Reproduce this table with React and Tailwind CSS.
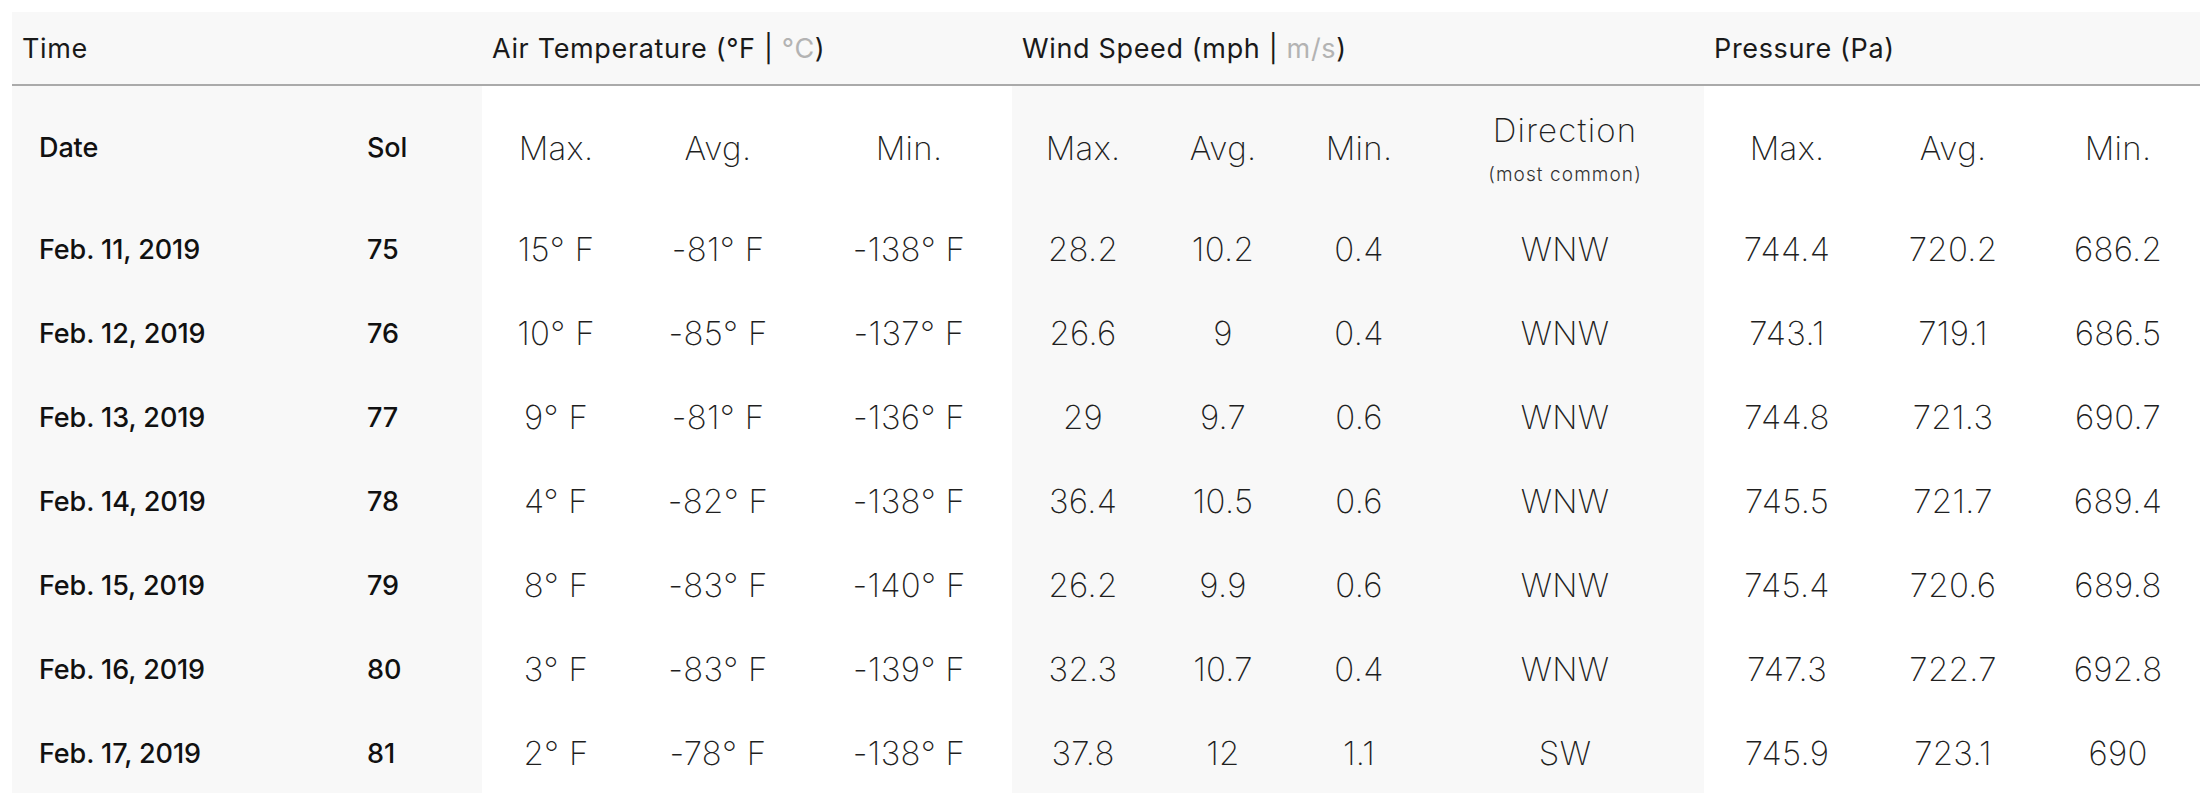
import React from 'react'

// Mars weather table: sols 75-81, InSight lander
const ROWS = [
  ['Feb. 11, 2019', '75', '15° F', '-81° F', '-138° F', '28.2', '10.2', '0.4', 'WNW', '744.4', '720.2', '686.2'],
  ['Feb. 12, 2019', '76', '10° F', '-85° F', '-137° F', '26.6', '9', '0.4', 'WNW', '743.1', '719.1', '686.5'],
  ['Feb. 13, 2019', '77', '9° F', '-81° F', '-136° F', '29', '9.7', '0.6', 'WNW', '744.8', '721.3', '690.7'],
  ['Feb. 14, 2019', '78', '4° F', '-82° F', '-138° F', '36.4', '10.5', '0.6', 'WNW', '745.5', '721.7', '689.4'],
  ['Feb. 15, 2019', '79', '8° F', '-83° F', '-140° F', '26.2', '9.9', '0.6', 'WNW', '745.4', '720.6', '689.8'],
  ['Feb. 16, 2019', '80', '3° F', '-83° F', '-139° F', '32.3', '10.7', '0.4', 'WNW', '747.3', '722.7', '692.8'],
  ['Feb. 17, 2019', '81', '2° F', '-78° F', '-138° F', '37.8', '12', '1.1', 'SW', '745.9', '723.1', '690'],
]

const WIDTHS = [
  'w-[328px]', 'w-[142px]',
  'w-[148px]', 'w-[176px]', 'w-[206px]',
  'w-[142px]', 'w-[138px]', 'w-[134px]', 'w-[278px]',
  'w-[166px]', 'w-[166px]', 'w-[164px]',
]

const GRAY = 'bg-[#f8f8f8]'
const WHITE = 'bg-white'

// background per column: time + wind are shaded, temp + pressure white
const BG = [GRAY, GRAY, WHITE, WHITE, WHITE, GRAY, GRAY, GRAY, GRAY, WHITE, WHITE, WHITE]

const labelCell = 'pl-[27px] pt-[6px] text-left text-[27px] font-medium tracking-[-0.1px] text-[#111]'
const numCell = 'pt-[6px] text-center text-[33px] font-extralight tracking-[0.3px] text-[#1f1f1f]'

export default function App() {
  return (
    <div className="min-h-screen bg-white pl-[12px] pt-[12px] font-[Inter,sans-serif]">
      <table className="w-[2188px] table-fixed border-collapse">
        <colgroup>
          {WIDTHS.map((w, i) => <col key={i} className={w} />)}
        </colgroup>
        <thead>
          <tr className="h-[73px] bg-[#f8f8f8] border-b-2 border-[#aaaaaa] text-[27px] tracking-[0.65px] text-[#1a1a1a]">
            <th colSpan={2} className="pl-[10px] pt-[3px] text-left font-normal">Time</th>
            <th colSpan={3} className="pl-[10px] pt-[3px] text-left font-normal">
              Air Temperature (°F | <span className="text-[#b3b3b3]">°C</span>)
            </th>
            <th colSpan={4} className="pl-[10px] pt-[3px] text-left font-normal">
              Wind Speed (mph | <span className="text-[#b3b3b3]">m/s</span>)
            </th>
            <th colSpan={3} className="pl-[10px] pt-[3px] text-left font-normal">Pressure (Pa)</th>
          </tr>
        </thead>
        <tbody>
          <tr className="h-[120px]">
            <td className={`${labelCell} ${GRAY}`}>Date</td>
            <td className={`${labelCell} ${GRAY}`}>Sol</td>
            <td className={`${numCell} ${WHITE}`}>Max.</td>
            <td className={`${numCell} ${WHITE}`}>Avg.</td>
            <td className={`${numCell} ${WHITE}`}>Min.</td>
            <td className={`${numCell} ${GRAY}`}>Max.</td>
            <td className={`${numCell} ${GRAY}`}>Avg.</td>
            <td className={`${numCell} ${GRAY}`}>Min.</td>
            <td className={`${numCell} ${GRAY}`}>
              <div className="leading-[52px] tracking-[1.2px]">Direction</div>
              <div className="text-[19px] font-light leading-[38px] tracking-[1.1px] text-[#333]">(most common)</div>
            </td>
            <td className={`${numCell} ${WHITE}`}>Max.</td>
            <td className={`${numCell} ${WHITE}`}>Avg.</td>
            <td className={`${numCell} ${WHITE}`}>Min.</td>
          </tr>
          {ROWS.map(row => (
            <tr key={row[0]} className="h-[84px]">
              {row.map((v, i) => (
                <td key={i} className={`${i < 2 ? labelCell : numCell} ${BG[i]}`}>{v}</td>
              ))}
            </tr>
          ))}
        </tbody>
      </table>
    </div>
  )
}
